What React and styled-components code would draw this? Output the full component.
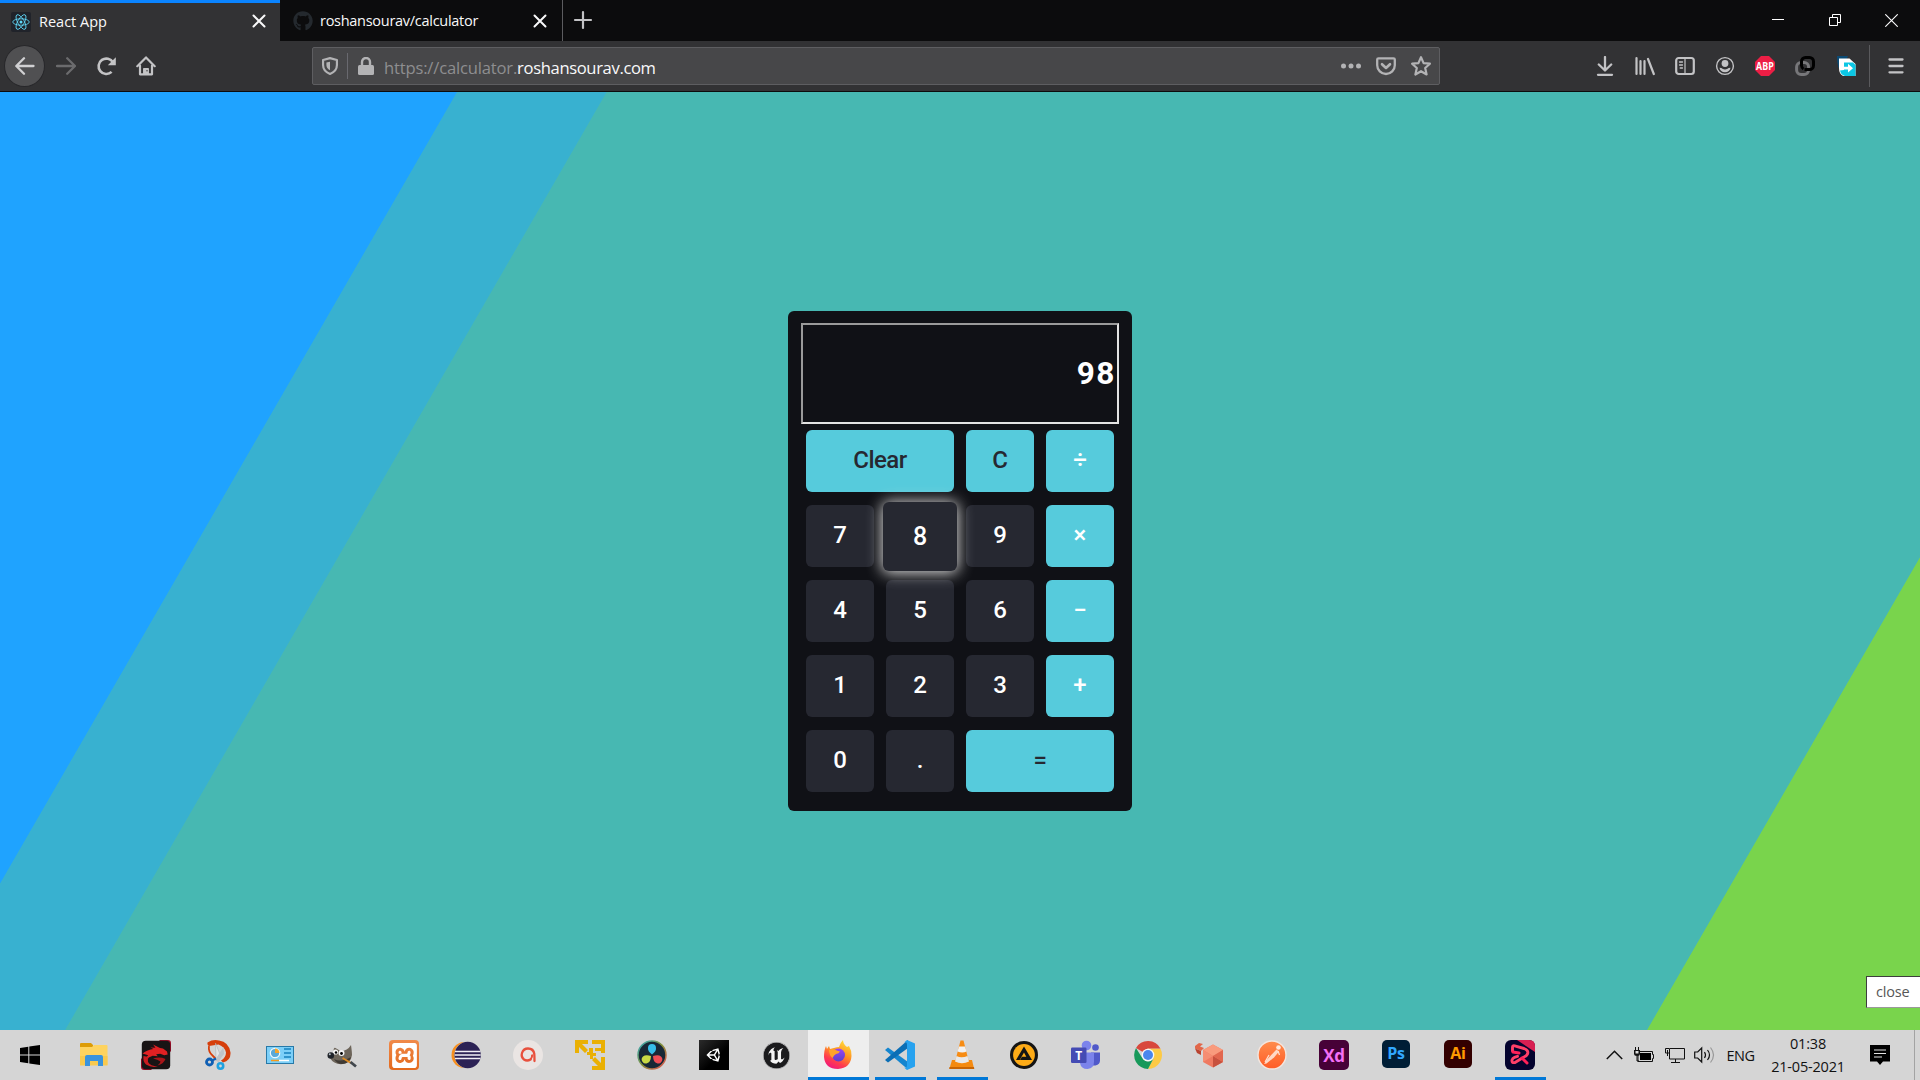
import React from 'react';
import styled, { createGlobalStyle, css } from 'styled-components';
import { FaGithub, FaUnity } from 'react-icons/fa';
import { SiUnrealengine, SiXampp } from 'react-icons/si';

const UI_FONT = '"Open Sans", "Noto Sans", sans-serif';

const GlobalStyle = createGlobalStyle`
  *, *::before, *::after { box-sizing: border-box; }
  body { margin: 0; overflow: hidden; background: #0c0c0d; }
  button { font: inherit; color: inherit; border: 0; padding: 0; background: none; }
  svg { display: block; flex: none; }
`;

const Screen = styled.div`
  width: 1920px;
  height: 1080px;
  display: flex;
  flex-direction: column;
  overflow: hidden;
  font-family: ${UI_FONT};
`;

/* ---------- browser chrome ---------- */

const TabBar = styled.div`
  display: flex;
  height: 41px;
  flex: none;
  background: #0c0c0d;
`;

const Tab = styled.div`
  display: flex;
  align-items: center;
  width: ${(p) => p.$width}px;
  padding: ${(p) => (p.$active ? '0 11px 0 11px' : '2px 12px 0 13px')};
  color: #f9f9fa;
  background: ${(p) => (p.$active ? '#323234' : '#0c0c0d')};
  border-top: ${(p) => (p.$active ? '3px solid #0a84ff' : '0')};
  border-right: ${(p) => (p.$active ? '0' : '1px solid #5c5c5f')};
`;

const Favicon = styled.span`
  display: grid;
  place-items: center;
  width: 20px;
  height: 20px;
  margin-top: -1px;
  border-radius: 2px;
  color: #24292e;
  background: ${(p) => p.$bg || 'transparent'};
`;

const TabTitle = styled.span`
  flex: 1;
  margin-left: ${(p) => p.$gap}px;
  margin-top: -1px;
  font-size: 14.5px;
  letter-spacing: ${(p) => p.$spacing}px;
  line-height: 20px;
  color: #f9f9fa;
  white-space: nowrap;
`;

const IconButton = styled.button`
  display: grid;
  place-items: center;
  width: ${(p) => p.$width || 40}px;
  height: 40px;
  flex: none;
  color: ${(p) => p.$color || '#c3c3c5'};
`;

const WindowControls = styled.div`
  display: flex;
  margin-left: auto;
`;

const Toolbar = styled.div`
  display: flex;
  align-items: center;
  height: 51px;
  flex: none;
  background: #323234;
  border-bottom: 1px solid #0c0c0d;
  padding: 0 0 0 4px;
`;

const BackButton = styled.button`
  display: grid;
  place-items: center;
  width: 41px;
  height: 42px;
  margin-right: 1px;
  border-radius: 50%;
  background: #505052;
  border: 1px solid #27272a;
  color: #d0d0d2;
`;

const UrlBar = styled.div`
  display: flex;
  align-items: center;
  width: 1128px;
  height: 38px;
  margin: 0 145px 0 146px;
  padding-right: 1px;
  flex: none;
  background: #474749;
  border: 1px solid #5e5e61;
  border-radius: 2px;
`;

const UrlDivider = styled.span`
  width: 1px;
  height: 26px;
  background: #69696f;
`;

const UrlText = styled.span`
  flex: 1;
  font-size: 16.6px;
  letter-spacing: -0.18px;
  line-height: 22px;
  padding-top: 3px;
  margin-left: 1px;
  color: #8e8e90;
  white-space: nowrap;
  b { font-weight: 400; color: #f9f9fa; letter-spacing: -0.36px; }
`;

const ToolbarDivider = styled.span`
  width: 1px;
  height: 42px;
  margin: 0 6px 0 3px;
  background: #5a5a5d;
`;

/* ---------- page ---------- */

const Page = styled.main`
  position: relative;
  flex: 1;
  min-height: 0;
  display: flex;
  justify-content: center;
  align-items: center;
  background: linear-gradient(
    120deg,
    #1fa3ff 395.4px,
    #38b1d0 396.2px,
    #38b1d0 525px,
    #47b8b2 525.8px,
    #47b8b2 1895px,
    #79d44c 1895.8px
  );
`;

const Calculator = styled.section`
  width: 344px;
  height: 500px;
  padding: 12px 13px;
  border-radius: 6px;
  background: #101116;
  font-family: Roboto, sans-serif;
`;

const Display = styled.div`
  display: flex;
  align-items: center;
  justify-content: flex-end;
  height: 101px;
  padding: 0 1px 0 0;
  border: 2px solid;
  border-color: #9a9a9a #e3e3e3 #e3e3e3 #9a9a9a;
  color: #fff;
  font-size: 31.5px;
  font-weight: 700;
  line-height: 36px;
  letter-spacing: 1.6px;
`;

const Keys = styled.div`
  display: grid;
  grid-template-columns: repeat(4, 68px);
  grid-auto-rows: 62px;
  gap: 13px 12px;
  padding: 6px 5px 0;
`;

const Key = styled.button`
  grid-column: span ${(p) => p.$span || 1};
  border-radius: 6px;
  padding-bottom: 2px;
  font-size: 24px;
  font-weight: 500;
  letter-spacing: ${(p) => (p.$span ? '-0.5px' : 'normal')};
  color: ${(p) => (p.$dark ? '#262831' : '#fff')};
  background: ${(p) => (p.$accent ? '#56cbdc' : '#262831')};
  ${(p) =>
    p.$hovered &&
    css`
      z-index: 1;
      margin: -3px -3px -4px;
      padding-bottom: 0;
      font-size: 25px;
      box-shadow: 0 1px 15px 1px #e0e0e0;
    `}
`;

const StatusTip = styled.div`
  position: absolute;
  right: 0;
  bottom: 22px;
  width: 54px;
  height: 32px;
  padding-left: 9px;
  background: #fff;
  border: 1px solid #3d3d3d;
  border-right: 0;
  border-bottom-color: #9a9a9a;
  color: #575757;
  font-size: 14.5px;
  letter-spacing: -0.2px;
  line-height: 30px;
`;

/* ---------- taskbar ---------- */

const Taskbar = styled.footer`
  display: flex;
  height: 50px;
  flex: none;
  background: #d5d5d5;
`;

const TaskItem = styled.button`
  display: flex;
  align-items: center;
  justify-content: center;
  flex: none;
  width: ${(p) => p.$width || 62}px;
  padding-right: ${(p) => p.$inset || 0}px;
  height: 50px;
  background: ${(p) =>
    p.$active
      ? 'linear-gradient(#0078d7, #0078d7) center bottom / 61px 3px no-repeat, linear-gradient(#eeeeee, #eeeeee) center / 61px 50px no-repeat'
      : p.$running
        ? 'linear-gradient(#0078d7, #0078d7) center bottom / 51px 3px no-repeat'
        : 'none'};
`;

const AppTile = styled.span`
  display: grid;
  place-items: center;
  width: ${(p) => p.$size || 30}px;
  height: ${(p) => p.$size || 30}px;
  border-radius: ${(p) => p.$radius || 0}px;
  background: ${(p) => p.$bg};
  color: ${(p) => p.$fg || '#fff'};
  font: 700 ${(p) => p.$font || 15}px/1 "Open Sans", sans-serif;
  letter-spacing: -0.3px;
  padding-bottom: ${(p) => p.$lift || 0}px;
  margin-top: -${(p) => p.$lift || 0}px;
`;

const Tray = styled.div`
  display: flex;
  align-items: center;
  margin-left: auto;
  color: #111;
`;

const TraySlot = styled.span`
  display: flex;
  justify-content: center;
  width: ${(p) => p.$width}px;
`;

const Language = styled.span`
  width: 41px;
  text-align: center;
  font-size: 14.5px;
  letter-spacing: -0.45px;
`;

const Clock = styled.div`
  width: 94px;
  text-align: center;
  font-size: 14.5px;
  line-height: 23px;
  letter-spacing: -0.2px;
  padding-bottom: 1px;
`;

const ShowDesktop = styled.span`
  width: 6px;
  height: 50px;
  border-left: 1px solid #a3a3a3;
`;

/* ---------- icons ---------- */

const Line = ({ size = 20, w = 2, children, ...rest }) => (
  <svg width={size} height={size} viewBox="0 0 20 20" fill="none" stroke="currentColor"
    strokeWidth={w} strokeLinecap="round" strokeLinejoin="round" {...rest}>{children}</svg>
);

const ReactLogo = () => (
  <svg width="18" height="18" viewBox="-12 -12 24 24" fill="none" stroke="#61dafb" strokeWidth="1.1">
    <ellipse rx="11" ry="4.3" />
    <ellipse rx="11" ry="4.3" transform="rotate(60)" />
    <ellipse rx="11" ry="4.3" transform="rotate(120)" />
    <circle r="2" fill="#61dafb" stroke="none" />
  </svg>
);

const TabClose = () => <Line size={20} w={2}><path d="M4.500 3.500l11 11M15.500 3.500l-11 11" /></Line>;
const Plus = () => <Line size={20} w={2.2}><path d="M10 2v16M2 10h16" /></Line>;
const Minimize = () => <svg width="12" height="12"><path d="M0 6h12v-1H0z" fill="#fff" /></svg>;
const Restore = () => (
  <svg width="12" height="12" fill="none" stroke="#fff"><path d="M.5 3.500h8v8h-8zM3.500 3.500V.5h8v8h-3" /></svg>
);
const WinClose = () => <svg width="13" height="13" stroke="#fff" strokeWidth="1.1"><path d="M.3 .3l12.400 12.400M12.700 .3L.3 12.700" /></svg>;

const Back = () => <Line w={2.3}><path d="M18.500 10H1.500M9 2.200L1.300 10 9 17.800" /></Line>;
const Forward = () => <Line w={2.3}><path d="M1 10h17.500M11.200 2.200L19 10l-7.800 7.800" /></Line>;
const Reload = () => (
  <Line w={2.6}>
    <path d="M15.600 15.900A7.700 7.700 0 1 1 17 6.500" strokeLinecap="butt" />
    <path d="M19.800 1.300v8h-8z" fill="currentColor" stroke="none" />
  </Line>
);
const Home = () => (
  <Line w={2.2}>
    <path d="M1.300 10.200L10 1.400l8.700 8.800" />
    <path d="M4 9.500V18.300h12V9.500" />
    <path d="M7.800 18v-5.300h4.400V18" fill="currentColor" strokeWidth="1.500" />
    <circle cx="11" cy="14.800" r=".7" fill="#323234" stroke="none" />
  </Line>
);
const Shield = () => (
  <Line size={18} w={2.4}>
    <path d="M10 1.300l7.700 2V9c0 5-3 8-7.700 9.800C5.300 17 2.300 14 2.300 9V3.300z" />
    <path d="M10 5.200v9.600C7.300 13.300 6 11.500 6 9V6z" fill="currentColor" stroke="none" />
  </Line>
);
const Lock = () => (
  <svg width="16" height="18" viewBox="0 0 16 18">
    <path d="M4 8V5a4 4 0 0 1 8 0v3" fill="none" stroke="currentColor" strokeWidth="2.400" />
    <rect x="0" y="8" width="16" height="10" rx="1.500" fill="currentColor" />
  </svg>
);
const Dots = () => (
  <svg width="20" height="6" fill="currentColor"><circle cx="2.500" cy="3" r="2.500" /><circle cx="10" cy="3" r="2.500" /><circle cx="17.500" cy="3" r="2.500" /></svg>
);
const Pocket = () => (
  <Line w={2.3}>
    <path d="M2.500 2.300h15q1.300 0 1.300 1.300v5.600a8.800 8.800 0 0 1-17.600 0V3.600q0-1.300 1.300-1.300z" />
    <path d="M6 8.200l4 3.800 4-3.800" strokeWidth="2.600" />
  </Line>
);
const Star = () => <Line w={2.2}><path d="M10 1.200l2.600 5.900 6.300.6-4.700 4.300 1.400 6.500L10 15.200l-5.600 3.300L5.800 12 1.100 7.700l6.300-.6z" /></Line>;
const Download = () => <Line w={2.3}><path d="M10 1v13.200M3.800 8.500l6.200 6 6.200-6" /><path d="M3 18.800h14" /></Line>;
const Library = () => <Line w={2.2}><path d="M1.500 2v16M5.500 5v13M9.500 5v13" /><path d="M13 3l5.800 15" /></Line>;
const Sidebar = () => (
  <Line w={2.2}>
    <rect x="1.200" y="2" width="17.600" height="16" rx="2.500" />
    <path d="M10 2v16" strokeWidth="1.200" />
    <path d="M4.500 6h3M4.500 9h3M5.200 12h2.300" strokeWidth="1.300" />
  </Line>
);
const Account = () => (
  <Line w={1.4}>
    <circle cx="10" cy="10" r="8.400" />
    <circle cx="10" cy="7.500" r="3.400" fill="currentColor" stroke="none" />
    <path d="M4.500 11.800q2.200.2 3 .9 2.500 1.400 5 0 .8-.7 3-.9-.8 4.400-5.500 4.400t-5.500-4.400z" fill="currentColor" stroke="none" />
  </Line>
);
const Adblock = () => (
  <svg width="20" height="20" viewBox="0 0 20 20" overflow="visible">
    <path d="M6 0h8l6 6v8l-6 6H6l-6-6V6z" fill="#ed1e45" />
    <text x="1.100" y="13.800" textLength="17.600" lengthAdjust="spacingAndGlyphs" fontFamily="Open Sans, sans-serif" fontWeight="700" fontSize="10.500" fill="#fff">ABP</text>
  </svg>
);
const Chain = () => (
  <svg width="20" height="20" viewBox="0 0 20 20" fill="none" strokeWidth="3">
    <rect x="1.600" y="6.500" width="12" height="12" rx="4.500" stroke="#77777a" />
    <path d="M9.500 13.500h5a4 4 0 0 0 4-4v-4a4 4 0 0 0-4-4h-4a4 4 0 0 0-4 4v4q.2 2.500 2 3.500" stroke="#000" />
  </svg>
);
const SendPage = () => (
  <svg width="20" height="20" viewBox="0 0 20 20">
    <path d="M1 0h11l-3 7-3 9Q1 13 1 0z" fill="#0b4a74" />
    <path d="M3 2.500h10.500L19.500 8v12H7Q3 18 3 12z" fill="#fff" />
    <path d="M8 6.500h9L19.500 9v11H9q-4-1-5-5.500l4-.5z" fill="#0cc7e4" />
    <path d="M5 10.800h7V7.800l5 4.400-5 4.400v-3H5z" fill="#fff" />
  </svg>
);
const Menu = () => <Line w={2.3}><path d="M3.500 3.500h13M3.500 10h13M3.500 16.300h13" /></Line>;

const App30 = ({ children, size = 30, ...rest }) => (
  <svg width={size} height={size} viewBox="0 0 30 30" {...rest}>{children}</svg>
);

const Windows = () => (
  <svg width="20" height="20" viewBox="0 0 20 20"><path d="M0 3l8.300-1.300v7.800H0zM9.300 1.500L20 0v9.500H9.300zM0 10.500h8.300v7.800L0 17zM9.300 10.500H20V20l-10.700-1.500z" /></svg>
);
const Explorer = () => (
  <App30>
    <path d="M1 4q0-1 1-1h10l2 2v4H1z" fill="#dd9c06" />
    <path d="M1 7h12l2-2h12.500q1 0 1 1v19H1z" fill="#fed35f" />
    <path d="M1 16h27.500v9.500H1z" fill="#f9c94e" />
    <path d="M6 26V17q0-2 2-2h14q2 0 2 2v9h-5v-5h-8v5z" fill="#3a93dd" />
  </App30>
);
const Dragon = () => (
  <App30>
    <path d="M18 0h9q3 0 3 3v9zM0 18v9q0 3 3 3h8z" fill="#9d0d28" />
    <rect x=".8" y=".8" width="28.400" height="28.400" rx="4" fill="#181415" />
    <path d="M1.500 13.500q5-4 11-4.500l-3-1.500 5 .3L12 4.500l7 3.500 3 .5 4 3 .7 3-3.500.8-4-1.500-4 .5 1.500 2-5-.5-4.500 2-3.500 2.500q1-3 3.500-5z" fill="#e02123" />
    <path d="M2.500 16q-1 5 2.500 8.500 5 3.500 12 2-8-.5-10-4.500-1-3 1-5z" fill="#c91c20" />
    <path d="M12 18.500q7-2 12.500.5-2 5-8 6.500 3-2.500 3-4-3-2-7.500-3z" fill="#a81519" />
  </App30>
);
const Snip = () => (
  <App30>
    <path d="M4.500 2.500Q10-1 16 .5q10 1.500 11.500 12 .5 8-7.500 10l-2-2q5-3 5-8Q22 7 15.500 4.500L6 6Q4 5 4.500 2.500z" fill="#d63e0b" />
    <path d="M6 6q-1 6 4 10l4 4" stroke="#d63e0b" strokeWidth="1.800" fill="none" />
    <path d="M12.500 3l5 12.500-1.500 6-3-2.500z" fill="#e3e4e6" stroke="#a4a8ae" strokeWidth=".5" />
    <path d="M20.500 7l.5 7-6 8-3-2z" fill="#bfc3c8" />
    <circle cx="6.500" cy="22" r="3" fill="none" stroke="#0f5fb4" strokeWidth="2.800" />
    <circle cx="17.500" cy="26" r="2.700" fill="none" stroke="#20a2e0" strokeWidth="2.600" />
    <path d="M9 20.500l4-2" stroke="#0f5fb4" strokeWidth="2.200" />
  </App30>
);
const ControlPanel = () => (
  <App30>
    <rect x="1.500" y="6.500" width="27" height="17" fill="#7ccff8" stroke="#2779a8" />
    <circle cx="10" cy="13" r="4.700" fill="#5aa9d8" stroke="#eefaff" strokeWidth="1.200" />
    <path d="M10 13V8.500a4.500 4.500 0 0 1 4.500 4.500z" fill="#f6a42a" />
    <path d="M19 9h7M19 13h7M19 17h7" stroke="#2f94cc" strokeWidth="1.800" />
    <path d="M6 20.500h8" stroke="#f39a1d" strokeWidth="1.500" /><path d="M14 20.500h10" stroke="#fff" strokeWidth="1.500" />
  </App30>
);
const Gimp = () => (
  <App30>
    <path d="M6.500 12Q6.500 7 8.500 8l5 3q7 0 10.500-6 1 7 1 10-1 8-9 9-9 1-13-6z" fill="#6d655a" />
    <path d="M7 19q7 4 17-2-2 7-9 7-5 0-8-5z" fill="#3f3a34" />
    <circle cx="8.500" cy="12" r="2.600" fill="#f4f4f4" /><circle cx="14.500" cy="13" r="3" fill="#f4f4f4" />
    <circle cx="9" cy="12.500" r="1.200" /><circle cx="14.500" cy="13.500" r="1.400" />
    <circle cx="3.800" cy="15.500" r="3.300" fill="#20242a" /><circle cx="2.800" cy="14.300" r="1" fill="#b7c0c8" />
    <path d="M15.500 18l8.500 5" stroke="#dc8a22" strokeWidth="2" /><path d="M23.500 22l5.500 4.500" stroke="#41474d" strokeWidth="2.800" />
  </App30>
);
const Eclipse = () => (
  <App30>
    <circle cx="13.500" cy="15" r="13" fill="#f78f1e" /><circle cx="17" cy="15" r="13.600" fill="#d5d5d5" /><circle cx="16.700" cy="15" r="13.200" fill="#2c2255" />
    <path d="M4 11.500h25.500M3.700 15h26M4 18.500h25.500" stroke="#f1eff6" strokeWidth="1.700" />
  </App30>
);
const Avira = () => (
  <App30>
    <circle cx="15" cy="15" r="15" fill="#eae5e3" />
    <path d="M17.500 19.500q-3.500 2-6.500 0-3.200-2.700-2-6.500Q10.500 8.500 15 8.500q5.500 0 6.300 5.500.2 3 .2 7" fill="none" stroke="#e8503d" strokeWidth="2.300" strokeLinecap="round" />
    <path d="M17.500 19.500q2-2 1.600-5" fill="none" stroke="#e8503d" strokeWidth="2" />
  </App30>
);
const VMware = () => (
  <App30 fill="#eab003">
    <path d="M0 0h13v4H7l6 6-3 3-6-6v6H0zM17 0h13v13h-4V4h-9zM17 30v-4h6l-6-6 3-3 6 6v-6h4v13z" />
    <path d="M14 8h4v5h3v3h-3v3h-3v-4h-3v-3h2zM20 8h6v3h-6z" />
  </App30>
);
const DaVinci = () => (
  <App30>
    <defs><linearGradient id="ring" x1="0" y1="0" x2="1" y2="1"><stop stopColor="#2ca7bf" /><stop offset=".5" stopColor="#86923a" /><stop offset="1" stopColor="#e34f54" /></linearGradient></defs>
    <circle cx="15" cy="15" r="14" fill="#182836" stroke="url(#ring)" strokeWidth="1.500" />
    <path d="M15 14.500q-4.500-3.500-4-6.500a4 4 0 0 1 8 0q.5 3-4 6.500z" fill="#36bde8" />
    <path d="M14 16q-.3 6-3.500 7a4 4 0 0 1-4.500-6.500q2.500-2 8-.5z" fill="#c9d944" />
    <path d="M16 16q.3 6 3.500 7a4 4 0 0 0 4.500-6.500q-2.500-2-8-.5z" fill="#ee4d55" />
  </App30>
);
const Firefox = () => (
  <App30>
    <defs>
      <linearGradient id="fox" x1=".8" y1="0" x2=".3" y2="1"><stop stopColor="#ffe53b" /><stop offset=".45" stopColor="#ff9122" /><stop offset=".75" stopColor="#ff3b4e" /><stop offset="1" stopColor="#f0187d" /></linearGradient>
      <linearGradient id="globe" x1=".5" y1="0" x2=".5" y2="1"><stop stopColor="#9a45f5" /><stop offset="1" stopColor="#5b3fc9" /></linearGradient>
    </defs>
    <path d="M3 6l1 3 2-3 1 3 4-1q3-1 5-1 1-4 4-7 0 4 4 7l2-1q3 5 2.500 10-.7 12-13.500 13Q2 29 1 17 1 10 3 6z" fill="url(#fox)" />
    <circle cx="15.500" cy="15" r="6.500" fill="url(#globe)" />
    <path d="M6 10q3-2 6-.3 2 1.300 5 1.800-1 2-4 2.500-2 1-3.500 4-3.500-3-3.500-8z" fill="#ffa329" />
  </App30>
);
const VSCode = () => (
  <App30>
    <path d="M0 10l3-2.500L23 22v7.500z" fill="#1485cf" />
    <path d="M0 20l3 2.500L23 8V0z" fill="#0b6eb5" />
    <path d="M22 0l8 3.500v23L22 30l-3-2.500q3 1 3-2V4.500q0-3-3-2z" fill="#27a2ef" />
  </App30>
);
const Vlc = () => (
  <App30>
    <path d="M5 20h20l2 8.500H2.500z" fill="#f48a10" /><path d="M2.500 27h24.500l.3 2H2.200z" fill="#c96503" />
    <path d="M13.500.5h3L22 22q-7 4-14 0z" fill="#f78c14" />
    <path d="M12 6.500h6l1.500 5q-4 2-9 0z" fill="#f2f2f2" /><path d="M9.500 16q5 2.500 11 0l1.500 5.500q-7 3.500-14 0z" fill="#e9e9e9" />
  </App30>
);
const Aimp = () => (
  <App30>
    <circle cx="15" cy="15" r="14" fill="#151515" /><circle cx="15" cy="15" r="10.900" fill="#fdab17" />
    <path d="M15 6.500l8 13.500h-12l2-3.200h4.300l-2.300-4.200-4.300 7.400H7z" fill="#151515" />
  </App30>
);
const Teams = () => (
  <App30 overflow="visible">
    <circle cx="24.500" cy="7.500" r="3.300" fill="#5059c9" /><path d="M20 12.500h9v8q0 4-4.500 5H20z" fill="#5059c9" />
    <circle cx="15.500" cy="5.500" r="4.800" fill="#7b83eb" /><path d="M10 12.500h13v9q0 7-6.500 7.500-6.500 0-7.500-6z" fill="#7b83eb" />
    <rect x="0" y="7.500" width="15.500" height="15.500" rx="1.200" fill="#444bb4" />
    <text x="7.700" y="19.500" textAnchor="middle" fontFamily="Open Sans, sans-serif" fontWeight="700" fontSize="12" fill="#fff">T</text>
  </App30>
);
const Chrome = () => (
  <App30>
    <path d="M15 8.500h12.400A14 14 0 0 1 15 29l5.600-10.800z" fill="#fdca45" />
    <path d="M3 8a14 14 0 0 1 24.400.5H15L9.400 11.800z" fill="#d8483c" />
    <path d="M3 8l6.400 10.200A6.500 6.500 0 0 0 20.600 18.200L15 29A14 14 0 0 1 3 8z" fill="#17995a" />
    <circle cx="15" cy="15" r="6.300" fill="#f7f7f7" /><circle cx="15" cy="15" r="5" fill="#4a86ee" />
  </App30>
);
const Cubes = () => (
  <App30 size={30}>
    <path d="M0 6l4-3 4 1-3 2.500 4 1.500-3 3-6-2.500z" fill="#e2674a" /><path d="M0 8.500l6 2.500v4l-4-2z" fill="#b9432f" />
    <path d="M18 4.500L28 10v12l-10 5.500L8 22V10z" fill="#ef7a61" />
    <path d="M18 4.500L28 10l-10 6-10-6z" fill="#f99b7d" /><path d="M8 10l10 6L8 22z" fill="#f58e73" />
    <path d="M18 16L28 22l-10 5.500z" fill="#c7513e" /><path d="M28 10v12l-10-6z" fill="#e2674f" />
  </App30>
);
const Postman = () => (
  <App30>
    <defs><linearGradient id="post" x1="0" y1="0" x2="0" y2="1"><stop stopColor="#ff8d4d" /><stop offset="1" stopColor="#ff5c26" /></linearGradient></defs>
    <circle cx="15" cy="15" r="14" fill="url(#post)" stroke="#f3e6df" strokeWidth="1.400" />
    <circle cx="21.500" cy="7.500" r="2.300" fill="#ffe9de" />
    <path d="M19.500 9.500l2.500 2-5 6-7.500 6L7 24l3-4.500z" fill="#ffd9c6" />
    <path d="M21 11l1.500 4M12 15l-4 7" stroke="#ffe2d4" strokeWidth="1.200" />
  </App30>
);
const Recorder = () => (
  <App30>
    <rect width="30" height="30" rx="6" fill="#04032e" />
    <path d="M12 0h12q6 0 6 6v6z" fill="#d81f52" />
    <path d="M7.500 11V7.500q0-2.200 2.200-1.600l9.300 2.600q5 2 3.500 5.500-1 2-3.500 3L10 22.500q-3.500.8-3-2.500.5-2 2.500-2.700l3-1" fill="none" stroke="#ff3f68" strokeWidth="2.900" strokeLinecap="round" strokeLinejoin="round" />
    <path d="M8 12l6 1M17 18l5 5" fill="none" stroke="#ff2058" strokeWidth="3" strokeLinecap="round" />
  </App30>
);

const TrayChevron = () => <svg width="17" height="10" fill="none" stroke="currentColor" strokeWidth="1.500"><path d="M.8 9l7.700-7.700L16.200 9" /></svg>;
const Battery = () => (
  <svg width="20" height="16" viewBox="0 0 20 16">
    <path d="M4 4.500h14.500v3h1v4h-1v3H4z" fill="none" stroke="#111" /><path d="M6 6h11v7H6z" fill="#000" />
    <path d="M0 3h6v3.500Q6 9 3 9T0 6.500z" fill="#111" /><path d="M1.500 0v3M4.500 0v3M3 9v5h2" stroke="#111" fill="none" />
    <path d="M1.500 4h3v2.500h-3z" fill="#ddd" />
  </svg>
);
const Network = () => (
  <svg width="20" height="17" fill="none" stroke="#111">
    <path d="M5 1.500h14.500v10.500h-15V6M10.500 12v3.500M6 15.500h9" /><path d="M.5 1.500h4v4.500h-4zM2.500 3v6" />
  </svg>
);
const Speaker = () => (
  <svg width="21" height="18" fill="none" stroke="#111" strokeWidth="1.200">
    <path d="M.7 6h3l4-4v14l-4-4h-3z" /><path d="M10.500 6q2 3 0 6M13.500 4q4 5 0 10" /><path d="M16.500 1.500q6 7.500 0 15" stroke="#999" />
  </svg>
);
const Notifications = () => (
  <svg width="20" height="20"><path d="M0 0h20v16.500h-7L10 20l-3-3.500H0z" /><path d="M4 5h12M4 8.500h12M4 12h8" stroke="#e2e2e2" strokeWidth="1.100" /></svg>
);

/* ---------- data ---------- */

const keys = [
  { label: 'Clear', $span: 2, $accent: true, $dark: true },
  { label: 'C', $accent: true, $dark: true },
  { label: '÷', $accent: true },
  { label: '7' }, { label: '8', $hovered: true }, { label: '9' }, { label: '×', $accent: true },
  { label: '4' }, { label: '5' }, { label: '6' }, { label: '−', $accent: true },
  { label: '1' }, { label: '2' }, { label: '3' }, { label: '+', $accent: true },
  { label: '0' }, { label: '.' }, { label: '=', $span: 2, $accent: true, $dark: true },
];

const apps = [
  { name: 'explorer', icon: <Explorer /> },
  { name: 'dragon', icon: <Dragon /> },
  { name: 'snip', icon: <Snip /> },
  { name: 'panel', icon: <ControlPanel /> },
  { name: 'gimp', icon: <Gimp /> },
  { name: 'xampp', icon: <AppTile $bg="linear-gradient(#f08a4a, #e4691c)" $radius={4}><SiXampp size={25} /></AppTile> },
  { name: 'eclipse', icon: <Eclipse /> },
  { name: 'avira', icon: <Avira /> },
  { name: 'vmware', icon: <VMware /> },
  { name: 'davinci', icon: <DaVinci /> },
  { name: 'unity', icon: <AppTile $bg="linear-gradient(135deg, #2b2b2b, #000 60%)"><FaUnity size={16} /></AppTile> },
  { name: 'unreal', icon: <AppTile $bg="#1b1b1d" $fg="#f4f4f4" $size={27} $radius={14}><SiUnrealengine size={27} /></AppTile> },
  { name: 'firefox', icon: <Firefox />, $active: true },
  { name: 'vscode', icon: <VSCode />, $running: true },
  { name: 'vlc', icon: <Vlc />, $running: true },
  { name: 'aimp', icon: <Aimp /> },
  { name: 'teams', icon: <Teams /> },
  { name: 'chrome', icon: <Chrome /> },
  { name: 'cubes', icon: <Cubes /> },
  { name: 'postman', icon: <Postman /> },
  { name: 'xd', icon: <AppTile $bg="#470137" $fg="#f36ff5" $radius={5} $font={17}>Xd</AppTile> },
  { name: 'ps', icon: <AppTile $bg="#001e36" $fg="#31a8ff" $radius={5} $size={28} $font={16} $lift={2}>Ps</AppTile> },
  { name: 'ai', icon: <AppTile $bg="#330000" $fg="#ff9a00" $radius={5} $size={28} $font={16} $lift={2}>Ai</AppTile> },
  { name: 'recorder', icon: <Recorder />, $running: true },
];

export default function App() {
  return (
    <Screen>
      <GlobalStyle />
      <TabBar>
        <Tab $active $width={280}>
          <Favicon $bg="#20232a"><ReactLogo /></Favicon>
          <TabTitle $gap={8} $spacing={0}>React App</TabTitle>
          <TabClose />
        </Tab>
        <Tab $width={283}>
          <Favicon><FaGithub size={20} /></Favicon>
          <TabTitle $gap={7} $spacing={-0.28}>roshansourav/calculator</TabTitle>
          <TabClose />
        </Tab>
        <IconButton><Plus /></IconButton>
        <WindowControls>
          <IconButton $width={57}><Minimize /></IconButton>
          <IconButton $width={57}><Restore /></IconButton>
          <IconButton $width={57}><WinClose /></IconButton>
        </WindowControls>
      </TabBar>

      <Toolbar>
        <BackButton><Back /></BackButton>
        <IconButton $color="#6b6b6d"><Forward /></IconButton>
        <IconButton><Reload /></IconButton>
        <IconButton><Home /></IconButton>
        <UrlBar>
          <IconButton $width={34} $color="#b3b3b5"><Shield /></IconButton>
          <UrlDivider />
          <IconButton $width={35} $color="#b3b3b5"><Lock /></IconButton>
          <UrlText>https://calculator.<b>roshansourav.com</b></UrlText>
          <IconButton $width={35} $color="#b3b3b5"><Dots /></IconButton>
          <IconButton $width={35} $color="#b3b3b5"><Pocket /></IconButton>
          <IconButton $width={35} $color="#b3b3b5"><Star /></IconButton>
        </UrlBar>
        <IconButton><Download /></IconButton>
        <IconButton><Library /></IconButton>
        <IconButton><Sidebar /></IconButton>
        <IconButton><Account /></IconButton>
        <IconButton><Adblock /></IconButton>
        <IconButton><Chain /></IconButton>
        <IconButton $width={41}><SendPage /></IconButton>
        <ToolbarDivider />
        <IconButton><Menu /></IconButton>
      </Toolbar>

      <Page>
        <Calculator>
          <Display>98</Display>
          <Keys>
            {keys.map(({ label, ...look }) => <Key key={label} {...look}>{label}</Key>)}
          </Keys>
        </Calculator>
        <StatusTip>close</StatusTip>
      </Page>

      <Taskbar>
        <TaskItem $width={63} $inset={3}><Windows /></TaskItem>
        {apps.map(({ name, icon, ...state }) => <TaskItem key={name} {...state}>{icon}</TaskItem>)}
        <Tray>
          <TraySlot $width={28}><TrayChevron /></TraySlot>
          <TraySlot $width={32}><Battery /></TraySlot>
          <TraySlot $width={29}><Network /></TraySlot>
          <TraySlot $width={31}><Speaker /></TraySlot>
          <Language>ENG</Language>
          <Clock>01:38<br />21-05-2021</Clock>
          <TraySlot $width={50}><Notifications /></TraySlot>
          <TraySlot $width={9} />
          <ShowDesktop />
        </Tray>
      </Taskbar>
    </Screen>
  );
}
